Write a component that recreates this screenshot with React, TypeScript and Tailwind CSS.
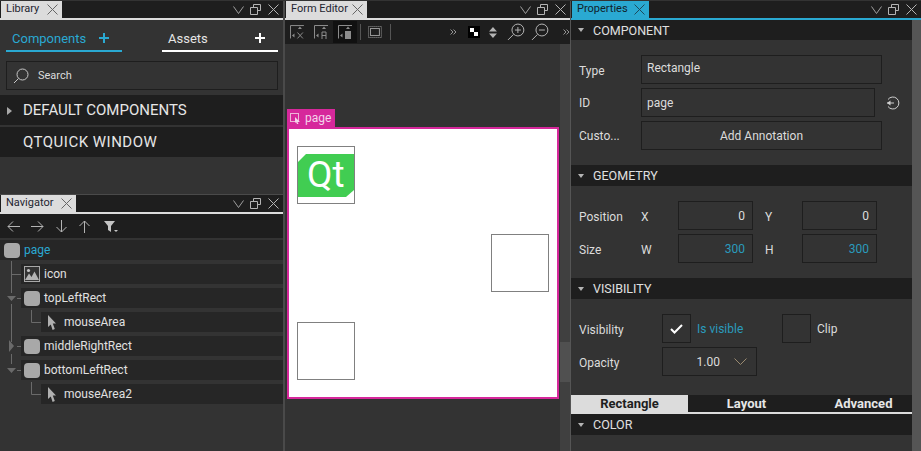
import type { ReactNode } from 'react';

const CloseIcon = ({ size = 11, color = '#b4b4b4' }: { size?: number; color?: string }) => (
  <svg width={size} height={size} viewBox="0 0 11 11" fill="none" stroke={color} strokeWidth="1">
    <path d="M0.5 0.5L10.5 10.5M10.5 0.5L0.5 10.5" />
  </svg>
);

const HeaderButtons = () => (
  <div className="ml-auto flex items-center gap-[6px] pr-[4px]">
    <svg width="11" height="8" viewBox="0 0 11 8" fill="none" stroke="#a0a0a0">
      <path d="M0.5 0.5L5.5 7.5L10.5 0.5" />
    </svg>
    <svg width="11" height="11" viewBox="0 0 11 11" fill="none" stroke="#b4b4b4">
      <path d="M0.5 3.5H7.5V10.5H0.5ZM3.5 3.5V0.5H10.5V6.5H7.5" />
    </svg>
    <span className="ml-[1px] flex">
      <CloseIcon />
    </span>
  </div>
);

const PanelHeader = ({ title, w, blue }: { title: string; w: string; blue?: boolean }) => (
  <div
    className={`flex h-[19px] shrink-0 border-b-2 bg-[#1e1e1e] ${blue ? 'border-[#2aa9d2]' : 'border-[#dcdcdc]'}`}
  >
    <div
      className={`ml-[1px] flex items-center justify-between whitespace-nowrap pl-[5px] pr-[4px] text-[11px] ${w} ${
        blue ? 'bg-[#2aa9d2] text-[#10222a]' : 'bg-[#dcdcdc] text-[#1e2430]'
      }`}
    >
      <span>{title}</span>
      <CloseIcon color={blue ? '#1d4a5c' : '#666666'} />
    </div>
    <HeaderButtons />
  </div>
);

const Field = ({ className, children }: { className: string; children?: ReactNode }) => (
  <div className={`flex h-[29px] items-center border border-[#1e1e1e] bg-[#333333] text-[12px] ${className}`}>
    {children}
  </div>
);

const Section = ({ title, className = '' }: { title: string; className?: string }) => (
  <div className={`flex items-center bg-[#1e1e1e] pl-[6px] text-[12.5px] text-[#e0e0e0] ${className}`}>
    <svg width="8" height="4" viewBox="0 0 8 4" className="mr-[8px]">
      <path d="M1 0H7L4 4Z" fill="#b4b4b4" />
    </svg>
    <span className="pt-[2px]">{title}</span>
  </div>
);

const PlusIcon = ({ color }: { color: string }) => (
  <svg width="10" height="10" viewBox="0 0 10 10" className="mt-[4px]" fill="none" stroke={color} strokeWidth="2">
    <path d="M5 0V10M0 5H10" />
  </svg>
);

const RectIcon = () => <span className="h-[15px] w-[16px] shrink-0 rounded-[4px] bg-[#a8a8a8]" />;

const CursorIcon = () => (
  <svg width="10" height="15" viewBox="0 0 10 15" className="shrink-0">
    <path d="M1 0L9 8.5H5.8L7.8 14L5.6 15L3.8 9.5L1 12Z" fill="#b0b0b0" />
  </svg>
);

const ImageIcon = () => (
  <svg width="16" height="16" viewBox="0 0 16 16" className="shrink-0">
    <rect x="0.5" y="0.5" width="15" height="15" fill="#333" stroke="#a8a8a8" />
    <circle cx="4.5" cy="4.5" r="1.6" fill="#c4c4c4" />
    <path d="M1 14L5 7.5L7.5 11L10.5 5.5L15 14Z" fill="#b4b4b4" />
  </svg>
);

const TreeRow = ({ label, icon, indent }: { label: string; icon: ReactNode; indent: string }) => (
  <div className={`flex h-[20px] items-center gap-[4px] bg-[#262626] pl-[3px] text-[12px] text-[#e0e0e0] ${indent}`}>
    <span className="flex w-[16px] justify-center">{icon}</span>
    {label}
  </div>
);

const Library = () => (
  <div className="flex h-[175px] shrink-0 flex-col">
    <PanelHeader title="Library" w="w-[61px]" />
    <div className="mt-[7px] flex justify-between pl-[6px] pr-[5px] text-[13px]">
      <div className="flex h-[25px] w-[116px] justify-between border-b-2 border-[#2aa9d2] pl-[6px] pr-[13px] pt-[2px] text-[#2aa9d2]">
        <span>Components</span>
        <PlusIcon color="#2aa9d2" />
      </div>
      <div className="flex h-[25px] w-[116px] justify-between border-b-2 border-white pl-[6px] pr-[13px] pt-[2px] text-[#e6e6e6]">
        <span>Assets</span>
        <PlusIcon color="#ffffff" />
      </div>
    </div>
    <div className="ml-[6px] mr-[5px] mt-[9px] flex h-[29px] items-center gap-[9px] border border-[#1e1e1e] pl-[6px] text-[11px] text-[#dcdcdc]">
      <svg width="16" height="16" viewBox="0 0 16 16" fill="none" stroke="#c8c8c8" strokeWidth="1">
        <circle cx="9.5" cy="6.5" r="5.5" />
        <path d="M5.5 10.5L1 15" />
      </svg>
      <span className="pt-[2px]">Search</span>
    </div>
    <div className="mt-[5px] flex h-[30px] items-center bg-[#1e1e1e] pl-[7px] pt-[1px] text-[15px] text-[#e6e6e6]">
      <svg width="5" height="8" viewBox="0 0 5 8" className="mr-[11px]">
        <path d="M0 0L5 4L0 8Z" fill="#a8a8a8" />
      </svg>
      DEFAULT COMPONENTS
    </div>
    <div className="mt-[2px] flex h-[30px] items-center bg-[#1e1e1e] pl-[23px] pt-[1px] text-[15px] tracking-[0.5px] text-[#e6e6e6]">
      QTQUICK WINDOW
    </div>
  </div>
);

const Navigator = () => (
  <div className="flex flex-1 flex-col">
    <div className="mt-[18px] h-[1px] bg-[#4a4a4a]" />
    <PanelHeader title="Navigator" w="w-[75px]" />
    <div className="flex h-[24px] items-center gap-[11px] bg-[#1e1e1e] pl-[7px]">
      <svg width="13" height="11" viewBox="0 0 13 11" fill="none" stroke="#b4b4b4"><path d="M13 5.5H1M6 0.5L1 5.5L6 10.5" /></svg>
      <svg width="13" height="11" viewBox="0 0 13 11" fill="none" stroke="#b4b4b4"><path d="M0 5.5H12M7 0.5L12 5.5L7 10.5" /></svg>
      <svg width="11" height="13" viewBox="0 0 11 13" fill="none" stroke="#b4b4b4" className="ml-[1px]"><path d="M5.5 0V12M0.5 7L5.5 12L10.5 7" /></svg>
      <svg width="11" height="13" viewBox="0 0 11 13" fill="none" stroke="#b4b4b4" className="ml-[1px]"><path d="M5.5 13V1M0.5 6L5.5 1L10.5 6" /></svg>
      <svg width="14" height="11" viewBox="0 0 14 11" className="ml-[3px]">
        <path d="M0 0H11L7 5V11L4 9V5ZM10 9H14L12 11Z" fill="#c4c4c4" />
      </svg>
    </div>
    <div className="relative mt-[2px] flex flex-col gap-[4px]">
      <div className="flex h-[20px] items-center gap-[4px] bg-[#262626] pl-[4px] text-[12px] text-[#2aa9d2]">
        <RectIcon />
        page
      </div>
      <TreeRow label="icon" icon={<ImageIcon />} indent="ml-[21px]" />
      <TreeRow label="topLeftRect" icon={<RectIcon />} indent="ml-[21px]" />
      <TreeRow label="mouseArea" icon={<CursorIcon />} indent="ml-[41px]" />
      <TreeRow label="middleRightRect" icon={<RectIcon />} indent="ml-[21px]" />
      <TreeRow label="bottomLeftRect" icon={<RectIcon />} indent="ml-[21px]" />
      <TreeRow label="mouseArea2" icon={<CursorIcon />} indent="ml-[41px]" />
      <svg width="41" height="160" viewBox="0 0 41 160" fill="none" stroke="#6a6a6a" className="absolute left-0 top-[20px]">
        <path d="M11.5 1V33M11.5 44V82M11.5 94V104M11.5 14.500H21M17 38.500H21M17 86.500H21M17 110.500H21M31.500 50V62.500H41M31.500 122V134.500H41" />
        <path d="M7 36H16L11.500 41ZM9 80L14 86L9 92ZM7 108H16L11.500 113Z" fill="#6a6a6a" stroke="none" />
      </svg>
    </div>
  </div>
);

const ToolGlyph = ({ children }: { children: ReactNode }) => (
  <svg width="14" height="14" viewBox="0 0 14 14" fill="none" stroke="#8c8c8c">
    <path d="M0.500 13.500V0.500H14" />
    <path d="M8 4L10 1.500L12 4ZM4.500 8.500V12.500L2 10.500Z" fill="#8c8c8c" stroke="none" />
    {children}
  </svg>
);

const DoubleChevron = ({ className }: { className: string }) => (
  <svg width="7" height="6" viewBox="0 0 7 6" fill="none" stroke="#9a9a9a" className={className}>
    <path d="M0.500 0.500L3 3L0.500 5.500M3.500 0.500L6 3L3.500 5.500" />
  </svg>
);

const FormToolbar = () => (
  <div className="flex h-[24px] shrink-0 items-center bg-[#1e1e1e] pl-[5px]">
    <ToolGlyph><path d="M7.500 7.500L13 13.500M13 7.500L7.500 13.500" /></ToolGlyph>
    <span className="ml-[10px] flex"><ToolGlyph><path d="M8 14V7H12V14M8 10.500H12" /></ToolGlyph></span>
    <span className="ml-[5px] flex h-[22px] w-[24px] items-center justify-center bg-[#111111]">
      <ToolGlyph><rect x="7" y="6" width="6" height="8" fill="#8c8c8c" stroke="none" /></ToolGlyph>
    </span>
    <span className="ml-[3px] h-[16px] w-[1px] bg-[#555555]" />
    <svg width="14" height="12" viewBox="0 0 14 12" fill="none" className="ml-[7px]">
      <rect x="2.500" y="2.500" width="9" height="7" stroke="#9a9a9a" />
      <rect x="0.500" y="0.500" width="13" height="11" stroke="#9a9a9a" strokeDasharray="1 1" />
    </svg>
    <span className="ml-[8px] h-[16px] w-[1px] bg-[#555555]" />
    <DoubleChevron className="ml-[59px]" />
    <span className="ml-[12px] grid h-[12px] w-[12px] grid-cols-2 bg-black p-[2px]">
      <span className="bg-white" />
      <span />
      <span />
      <span className="bg-white" />
    </span>
    <svg width="8" height="11" viewBox="0 0 8 11" className="ml-[9px]">
      <path d="M0 4.500L4 0L8 4.500ZM0 6.500H8L4 11Z" fill="#b4b4b4" />
    </svg>
    <svg width="18" height="18" viewBox="0 0 18 18" fill="none" stroke="#b4b4b4" className="ml-[10px]">
      <circle cx="11" cy="7" r="6" /><path d="M6.500 11.500L1 17M8 7H14M11 4V10" />
    </svg>
    <svg width="18" height="18" viewBox="0 0 18 18" fill="none" stroke="#b4b4b4" className="ml-[6px]">
      <circle cx="11" cy="7" r="6" /><path d="M6.500 11.500L1 17M8 7H14" />
    </svg>
    <DoubleChevron className="ml-[14px]" />
  </div>
);

const Canvas = () => (
  <div className="relative flex-1 bg-[#333333]">
    <div className="absolute bottom-0 right-0 top-0 w-[10px] bg-[#404040]">
      <div className="absolute left-0 top-[298px] h-[40px] w-full bg-[#505050]" />
    </div>
    <div className="absolute left-[2px] top-[65px] flex h-[18px] w-[48px] items-center gap-[4px] bg-[#d6289b] pl-[3px] text-[12px] text-[#f4d4ea]">
      <svg width="11" height="11" viewBox="0 0 11 11" fill="none">
        <rect x="0.500" y="0.500" width="8" height="8" stroke="#eeb4d8" />
        <path d="M5 4L10 9H7.500L8.500 11L7 11L6 9L5 10Z" fill="#f4d4ea" />
      </svg>
      page
    </div>
    <div className="absolute left-[2px] top-[83px] h-[272px] w-[272px] border-2 border-[#d6289b] bg-white">
      <div className="absolute left-[8px] top-[17px] h-[58px] w-[58px] border border-[#808080]">
        <svg width="56" height="44" viewBox="0 0 56 44" className="absolute left-0 top-[7px]">
          <path d="M8 0H56V36L48 43H0V8Z" fill="#41cd52" />
          <text x="9" y="33" fill="#ffffff" fontSize="37" fontFamily="Roboto, sans-serif">Qt</text>
        </svg>
      </div>
      <div className="absolute left-[202px] top-[105px] h-[58px] w-[58px] border border-[#808080]" />
      <div className="absolute left-[8px] top-[193px] h-[58px] w-[58px] border border-[#808080]" />
    </div>
  </div>
);

const Properties = () => (
  <div className="flex flex-1">
    <div className="flex w-[341px] flex-col text-[12px] text-[#dcdcdc]">
      <Section title="COMPONENT" className="h-[20px]" />
      <div className="mt-[15px] flex flex-col gap-[4px] pl-[8px]">
        <div className="flex items-center">
          <span className="w-[62px] pt-[2px]">Type</span>
          <Field className="w-[241px] pb-[3px] pl-[5px]">Rectangle</Field>
        </div>
        <div className="flex items-center">
          <span className="w-[62px]">ID</span>
          <Field className="w-[234px] pl-[5px]">page</Field>
          <svg width="14" height="14" viewBox="0 0 14 14" fill="none" stroke="#d0d0d0" className="ml-[11px]">
            <path d="M2 3.500A6 6 0 1 1 2 10.500" />
            <path d="M1 7H8" />
            <path d="M4.500 4.500V9.500L1 7Z" fill="#d0d0d0" stroke="none" />
          </svg>
        </div>
        <div className="flex items-center">
          <span className="w-[62px]">Custo...</span>
          <Field className="w-[241px] justify-center">Add Annotation</Field>
        </div>
      </div>
      <Section title="GEOMETRY" className="mt-[15px] h-[21px]" />
      <div className="mt-[15px] flex flex-col gap-[4px] pl-[8px]">
        {[
          { a: 'Position', b: 'X', c: 'Y', v: '0', color: 'text-[#dcdcdc]' },
          { a: 'Size', b: 'W', c: 'H', v: '300', color: 'text-[#2a9bbd]' },
        ].map((r) => (
          <div key={r.a} className="flex items-center">
            <span className="w-[62px] pt-[2px]">{r.a}</span>
            <span className="w-[37px] pt-[2px]">{r.b}</span>
            <Field className={`w-[75px] justify-end pr-[7px] ${r.color}`}>{r.v}</Field>
            <span className="ml-[12px] w-[37px] pt-[2px]">{r.c}</span>
            <Field className={`w-[75px] justify-end pr-[7px] ${r.color}`}>{r.v}</Field>
          </div>
        ))}
      </div>
      <Section title="VISIBILITY" className="mt-[15px] h-[21px]" />
      <div className="mt-[15px] flex flex-col gap-[4px] pl-[8px]">
        <div className="flex items-center">
          <span className="w-[83px] pt-[2px]">Visibility</span>
          <Field className="w-[29px] justify-center">
            <svg width="13" height="10" viewBox="0 0 13 10" fill="none" stroke="#ffffff" strokeWidth="2">
              <path d="M1 5L4.500 8.500L12 1" />
            </svg>
          </Field>
          <span className="ml-[6px] w-[85px] pt-[1px] text-[#2a9bbd]">Is visible</span>
          <Field className="w-[29px]" />
          <span className="ml-[6px] pt-[1px]">Clip</span>
        </div>
        <div className="flex items-center">
          <span className="w-[83px] pt-[2px]">Opacity</span>
          <Field className="w-[95px] justify-end pr-[9px]">
            1.00
            <svg width="13" height="7" viewBox="0 0 13 7" fill="none" stroke="#9a8a70" className="ml-[14px]">
              <path d="M0.500 0.500L6.500 6.500L12.500 0.500" />
            </svg>
          </Field>
        </div>
      </div>
      <div className="mt-[19px] grid h-[19px] grid-cols-[117px_117px_107px] overflow-hidden whitespace-nowrap border-b-2 border-[#dcdcdc] bg-[#1e1e1e] text-center text-[13px] font-bold leading-[17px] text-[#e6e6e6]">
        <span className="bg-[#dcdcdc] text-[#1e1e1e]">Rectangle</span>
        <span>Layout</span>
        <span className="pl-[10px]">Advanced</span>
      </div>
      <Section title="COLOR" className="h-[21px]" />
    </div>
    <div className="w-[9px] bg-[#555555]" />
  </div>
);

export default function App() {
  return (
    <div className="flex h-[451px] w-[921px] overflow-hidden bg-[#333333] pt-[1px] font-['Roboto',sans-serif]">
      <div className="flex w-[283px] flex-col">
        <Library />
        <Navigator />
      </div>
      <div className="w-[2px] bg-[#4a4a4a]" />
      <div className="flex w-[285px] flex-col">
        <PanelHeader title="Form Editor" w="w-[81px]" />
        <FormToolbar />
        <Canvas />
      </div>
      <div className="w-[1px] bg-[#555555]" />
      <div className="flex flex-1 flex-col">
        <PanelHeader title="Properties" w="w-[77px]" blue />
        <Properties />
      </div>
    </div>
  );
}
